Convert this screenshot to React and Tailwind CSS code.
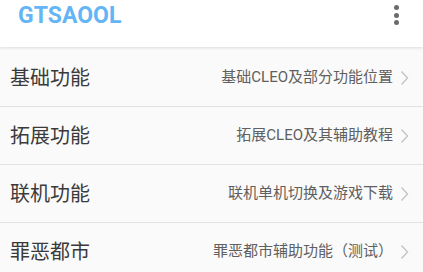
import React from 'react';

const items = [
  { title: '基础功能', desc: '基础CLEO及部分功能位置' },
  { title: '拓展功能', desc: '拓展CLEO及其辅助教程' },
  { title: '联机功能', desc: '联机单机切换及游戏下载' },
  { title: '罪恶都市', desc: '罪恶都市辅助功能（测试）' },
];

const Chevron = () => (
  <svg width="9" height="16" viewBox="0 0 9 16" fill="none" className="shrink-0">
    <path d="M1.5 1.5 L7.5 8 L1.5 14.5" stroke="#c4c4c4" strokeWidth="1.4" />
  </svg>
);

export default function App() {
  return (
    <div
      className="w-[423px] h-[272px] overflow-hidden bg-[#fafafa]"
      style={{ fontFamily: 'Roboto, "Noto Sans CJK SC", sans-serif' }}
    >
      <div className="relative z-10 h-[47px] bg-white flex items-start justify-between pl-[18px] pr-[19px] pt-[2px] shadow-[0_1px_3px_rgba(0,0,0,0.12)]">
        <span className="text-[23px] font-bold text-[#64b5f6] leading-[28px]">GTSAOOL</span>
        <div className="flex flex-col items-center gap-[2.5px] pt-[3px] pr-[5px]">
          <span className="w-[5px] h-[5px] rounded-full bg-[#6b6b6b]" />
          <span className="w-[5px] h-[5px] rounded-full bg-[#6b6b6b]" />
          <span className="w-[5px] h-[5px] rounded-full bg-[#6b6b6b]" />
        </div>
      </div>
      <div className="pt-[2px]">
        {items.map((it) => (
          <div
            key={it.title}
            className="h-[58px] flex items-center justify-between pl-[10px] pr-[14px] border-b border-[#e2e2e2]"
          >
            <span className="text-[20px] text-[#3a3a3a]">{it.title}</span>
            <div className="flex items-center gap-[7px]">
              <span className="text-[15px] text-[#5f5f5f]">{it.desc}</span>
              <Chevron />
            </div>
          </div>
        ))}
      </div>
    </div>
  );
}
